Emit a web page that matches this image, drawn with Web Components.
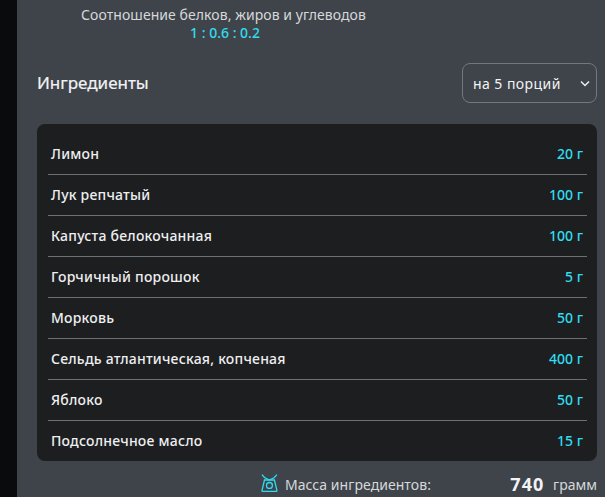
<!DOCTYPE html>
<html>
<head>
<meta charset="utf-8">
<style>
  html, body { margin: 0; height: 100%; background: #0a0b0c; overflow: hidden; }
  body { font-family: "Noto Sans", sans-serif; }
</style>
</head>
<body>
<recipe-panel>
  <ratio-line label="Соотношение белков, жиров и углеводов" value="1 : 0.6 : 0.2"></ratio-line>
  <section-head title="Ингредиенты" portions="на 5 порций"></section-head>
  <ingredient-list>
    <ingredient-row name="Лимон" amount="20 г"></ingredient-row>
    <ingredient-row name="Лук репчатый" amount="100 г"></ingredient-row>
    <ingredient-row name="Капуста белокочанная" amount="100 г"></ingredient-row>
    <ingredient-row name="Горчичный порошок" amount="5 г"></ingredient-row>
    <ingredient-row name="Морковь" amount="50 г"></ingredient-row>
    <ingredient-row name="Сельдь атлантическая, копченая" amount="400 г"></ingredient-row>
    <ingredient-row name="Яблоко" amount="50 г"></ingredient-row>
    <ingredient-row name="Подсолнечное масло" amount="15 г"></ingredient-row>
  </ingredient-list>
  <mass-total label="Масса ингредиентов:" value="740" unit="грамм"></mass-total>
</recipe-panel>

<script>
class RecipePanel extends HTMLElement {
  connectedCallback() {
    this.attachShadow({mode: 'open'}).innerHTML = `
    <style>
    :host {
      display: block;
      box-sizing: border-box;
      margin-left: 17px;
      height: 497px;
      padding: 6px 8px 0 20px;
      background: #3f444b;
      overflow: hidden;
    }
    </style>
    <slot></slot>`;
  }
}

class RatioLine extends HTMLElement {
  connectedCallback() {
    this.attachShadow({mode: 'open'}).innerHTML = `
    <style>
    :host {
      display: block;
      width: 328px;
      margin-left: 24px;
      text-align: center;
      font-size: 14px;
      line-height: 18px;
      color: #d6d8da;
    }
    span { display: block; margin-right: 3px; letter-spacing: .07px; }
    b { display: block; font-weight: 500; color: #30dcf0; }
    </style>
    <span>${this.getAttribute('label')}</span>
    <b>${this.getAttribute('value')}</b>`;
  }
}

class SectionHead extends HTMLElement {
  connectedCallback() {
    this.attachShadow({mode: 'open'}).innerHTML = `
    <style>
    :host {
      display: flex;
      justify-content: space-between;
      align-items: center;
      margin-top: 21px;
      height: 40px;
      color: #f2f3f4;
    }
    h2 { margin: 0 0 1px; font-size: 17px; font-weight: 400; -webkit-text-stroke: .2px #f2f3f4; }
    .select {
      box-sizing: border-box;
      width: 135px;
      height: 40px;
      display: flex;
      align-items: center;
      justify-content: space-between;
      padding: 0 4px 0 10px;
      border: 1px solid #73787e;
      border-radius: 8px;
      font-size: 14px;
      letter-spacing: .45px;
    }
    svg { display: block; }
    </style>
    <h2>${this.getAttribute('title')}</h2>
    <div class="select">
      <span>${this.getAttribute('portions')}</span>
      <svg width="14" height="14" viewBox="0 0 14 14" fill="none" stroke="#eceded" stroke-width="1.5"><path d="M3 5.5 7 9.5l4-4"/></svg>
    </div>`;
  }
}

class IngredientList extends HTMLElement {
  connectedCallback() {
    this.attachShadow({mode: 'open'}).innerHTML = `
    <style>
    :host {
      display: block;
      margin-top: 21px;
      padding: 10px 10px 0 11px;
      height: 337px;
      box-sizing: border-box;
      background: #1d1e20;
      border-radius: 8px;
    }
    </style>
    <slot></slot>`;
  }
}

class IngredientRow extends HTMLElement {
  connectedCallback() {
    this.attachShadow({mode: 'open'}).innerHTML = `
    <style>
    :host {
      display: flex;
      justify-content: space-between;
      align-items: center;
      box-sizing: border-box;
      height: 41px;
      padding: 0 4px 2px 3px;
      border-bottom: 1px solid #6c7177;
      font-size: 14px;
      font-weight: 500;
      color: #eeeff0;
    }
    :host(:last-child) { border-bottom: 0; }
    .name { letter-spacing: .22px; }
    .amount { color: #30dcf0; }
    </style>
    <span class="name">${this.getAttribute('name')}</span>
    <span class="amount">${this.getAttribute('amount')}</span>`;
  }
}

class MassTotal extends HTMLElement {
  connectedCallback() {
    this.attachShadow({mode: 'open'}).innerHTML = `
    <style>
    :host {
      display: flex;
      align-items: center;
      height: 30px;
      margin: 8px 0 0 224px;
      font-size: 14px;
      color: #d6d8da;
    }
    svg { display: block; margin: -2px 7px 0 0; }
    .label { width: 227px; letter-spacing: .06px; }
    b { width: 43px; font-size: 18px; font-weight: 700; letter-spacing: 1px; color: #f2f3f4; }
    </style>
    <svg width="17" height="18" viewBox="0 0 17 18" fill="none" stroke="#30dcf0" stroke-width="1.3">
      <path d="M1 .5 3.5 3.5 8.5 6 13.5 3.5 16 .5"/>
      <path d="M3.5 6h10l2.5 10.5a.8.8 0 0 1-.8 1H1.8a.8.8 0 0 1-.8-1z"/>
      <circle cx="8.5" cy="11.5" r="3"/>
    </svg>
    <span class="label">${this.getAttribute('label')}</span>
    <b>${this.getAttribute('value')}</b>
    <span>${this.getAttribute('unit')}</span>`;
  }
}

customElements.define('recipe-panel', RecipePanel);
customElements.define('ratio-line', RatioLine);
customElements.define('section-head', SectionHead);
customElements.define('ingredient-list', IngredientList);
customElements.define('ingredient-row', IngredientRow);
customElements.define('mass-total', MassTotal);
</script>
</body>
</html>
